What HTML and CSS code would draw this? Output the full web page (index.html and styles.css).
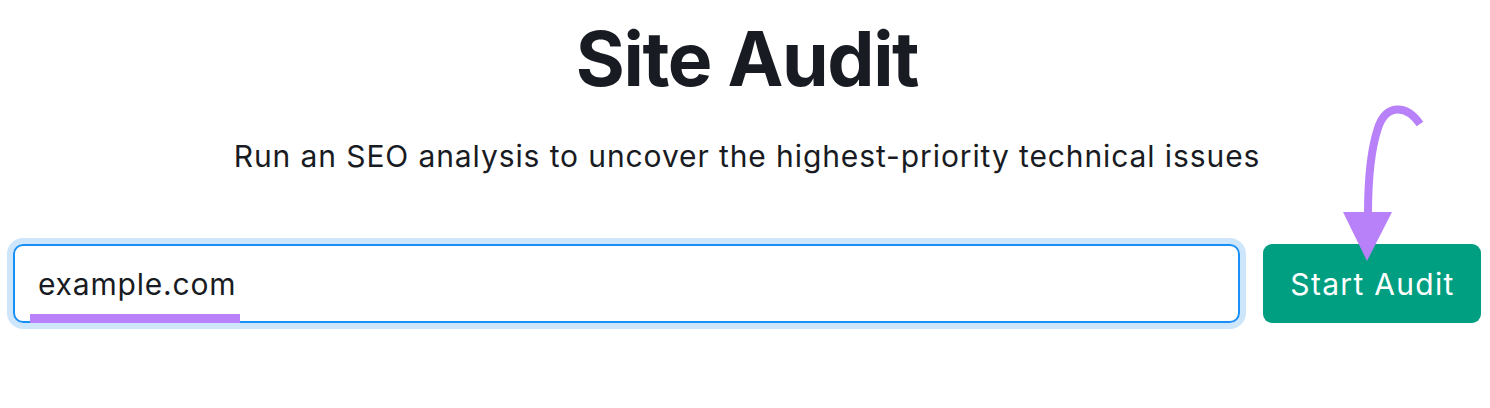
FILE: index.html
```html
<!DOCTYPE html>
<html lang="en">
<head>
<meta charset="utf-8">
<title>Site Audit</title>
<link rel="stylesheet" href="styles.css">
</head>
<body>
<main class="page">
  <h1 class="title">Site Audit</h1>
  <p class="subtitle">Run an SEO analysis to uncover the highest-priority technical issues</p>
  <form class="audit-form">
    <div class="field">
      <div class="input">example.com</div>
      <span class="mark"></span>
    </div>
    <button type="button" class="start">Start Audit</button>
  </form>
  <svg class="arrow" width="100" height="170" viewBox="1330 100 100 170" aria-hidden="true">
    <path d="M1420 124 C1406 104 1386 104 1378 128 C1370 152 1368 185 1368 214" fill="none" stroke="#b880f9" stroke-width="8"/>
    <polygon points="1343,212 1392,212 1367,261" fill="#b880f9"/>
  </svg>
</main>
</body>
</html>
```

FILE: styles.css
```css
* { box-sizing: border-box; }
html, body { margin: 0; padding: 0; background: #ffffff; }
body {
  font-family: "Inter", "Noto Sans", "Liberation Sans", sans-serif;
  color: #191b23;
}
.page {
  position: relative;
  width: 1490px;
  height: 408px;
  display: flex;
  flex-direction: column;
  align-items: center;
}
.title {
  margin: 21px 0 0;
  font-size: 75px;
  line-height: 75px;
  font-weight: 700;
  letter-spacing: -1.4px;
  padding-left: 4px;
}
.subtitle {
  margin: 45px 0 0;
  font-size: 30px;
  line-height: 30px;
  font-weight: 400;
  letter-spacing: 0.9px;
  padding-left: 4px;
}
.audit-form {
  align-self: stretch;
  margin: 73px 9px 0 13px;
  display: flex;
  gap: 23px;
  height: 79px;
}
.field {
  position: relative;
  flex: 1;
  border: 2px solid #1a8ff5;
  border-radius: 10px;
  box-shadow: 0 0 0 6px #cde6fc;
  display: flex;
  align-items: center;
}
.input {
  padding-left: 23px;
  padding-top: 1px;
  font-size: 30px;
  letter-spacing: 0.8px;
  color: #191b23;
}
.mark {
  position: absolute;
  left: 15px;
  bottom: -2px;
  width: 210px;
  height: 9px;
  background: #b880f9;
}
.start {
  width: 218px;
  border: 0;
  border-radius: 9px;
  background: #009f81;
  color: #ffffff;
  font-family: inherit;
  font-size: 30px;
  letter-spacing: 1.3px;
  padding: 1px 0 0 1px;
}
.arrow {
  position: absolute;
  left: 1330px;
  top: 100px;
  overflow: visible;
}
```
